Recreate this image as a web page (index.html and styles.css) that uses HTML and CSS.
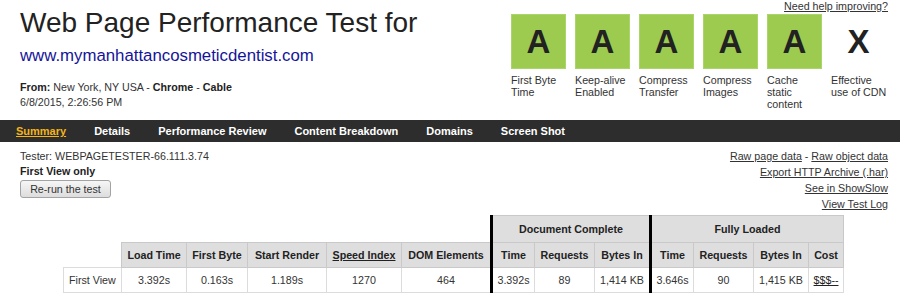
FILE: index.html
```html
<!DOCTYPE html>
<html lang="en">
<head>
    <meta charset="UTF-8">
    <title>WebPagetest Test Result</title>
    <link rel="stylesheet" href="styles.css">
</head>
<body>
    <div class="top">
        <div class="heading">
            <h1>Web Page Performance Test for</h1>
            <a href="#" class="url">www.mymanhattancosmeticdentist.com</a>
            <p class="from"><b>From:</b> New York, NY USA - <b>Chrome</b> - <b>Cable</b><br>6/8/2015, 2:26:56 PM</p>
        </div>
        <div class="grades">
            <a href="#" class="help">Need help improving?</a>
            <ul class="gradelist">
                <li><div class="grade">A</div><span>First Byte Time</span></li>
                <li><div class="grade">A</div><span>Keep-alive Enabled</span></li>
                <li><div class="grade">A</div><span>Compress Transfer</span></li>
                <li><div class="grade">A</div><span>Compress Images</span></li>
                <li><div class="grade">A</div><span>Cache static content</span></li>
                <li class="last"><div class="grade nograde">X</div><span>Effective use of CDN</span></li>
            </ul>
        </div>
    </div>

    <nav class="tabs">
        <a href="#" class="current">Summary</a>
        <a href="#">Details</a>
        <a href="#">Performance Review</a>
        <a href="#">Content Breakdown</a>
        <a href="#">Domains</a>
        <a href="#">Screen Shot</a>
    </nav>

    <div class="info">
        <div class="tester">
            Tester: WEBPAGETESTER-66.111.3.74<br>
            <b>First View only</b><br>
            <button class="rerun">Re-run the test</button>
        </div>
        <div class="links">
            <a href="#">Raw page data</a> - <a href="#">Raw object data</a><br>
            <a href="#">Export HTTP Archive (.har)</a><br>
            <a href="#">See in ShowSlow</a><br>
            <a href="#">View Test Log</a>
        </div>
    </div>

    <table class="results">
        <colgroup>
            <col style="width:58px"><col style="width:65px"><col style="width:61px"><col style="width:79px">
            <col style="width:75px"><col style="width:90px"><col style="width:43px"><col style="width:60px">
            <col style="width:56px"><col style="width:43px"><col style="width:60px"><col style="width:55px">
            <col style="width:35px">
        </colgroup>
        <tr class="group">
            <th colspan="6" class="empty"></th>
            <th colspan="3" class="sep">Document Complete</th>
            <th colspan="4" class="sep">Fully Loaded</th>
        </tr>
        <tr class="names">
            <th class="empty"></th>
            <th>Load Time</th>
            <th>First Byte</th>
            <th>Start Render</th>
            <th><a href="#">Speed Index</a></th>
            <th>DOM Elements</th>
            <th class="sep">Time</th>
            <th>Requests</th>
            <th>Bytes In</th>
            <th class="sep">Time</th>
            <th>Requests</th>
            <th>Bytes In</th>
            <th>Cost</th>
        </tr>
        <tr class="data">
            <td class="label">First View</td>
            <td>3.392s</td>
            <td>0.163s</td>
            <td>1.189s</td>
            <td>1270</td>
            <td>464</td>
            <td class="sep">3.392s</td>
            <td>89</td>
            <td>1,414 KB</td>
            <td class="sep">3.646s</td>
            <td>90</td>
            <td>1,415 KB</td>
            <td><a href="#">$$$--</a></td>
        </tr>
    </table>
</body>
</html>
```

FILE: styles.css
```css
body{
    margin: 0;
    font-family: 'Liberation Sans', Arial, sans-serif;
    font-size: 10.7px;
    color: #333;
    background-color: #fff;
}

a{
    color: #333;
}

.top{
    display: flex;
    justify-content: space-between;
    height: 110px;
    padding: 0 12px 0 20px;
}

h1{
    margin: 0;
    padding-top: 7px;
    font-size: 28px;
    font-weight: normal;
    line-height: 32px;
    color: #222;
}

.url{
    display: block;
    margin-top: 7px;
    font-size: 16.8px;
    line-height: 20px;
    color: #14149a;
    text-decoration: none;
}

.from{
    margin: 14px 0 0 0;
    line-height: 15px;
    color: #333;
}
.from b{
    color: #222;
}

.grades{
    display: flex;
    flex-direction: column;
    align-items: flex-end;
}

.help{
    line-height: 13px;
}

.gradelist{
    display: flex;
    gap: 9px;
    margin: 1px 0 0 0;
    padding: 0;
    list-style: none;
}

.gradelist li{
    width: 55px;
    line-height: 12px;
}
.gradelist li.last{
    width: 57px;
}

.grade{
    box-sizing: border-box;
    width: 55px;
    height: 55px;
    margin-bottom: 5px;
    background-color: #9ccb50;
    border: 1px solid #abd56c;
    color: #222;
    font-size: 33px;
    font-weight: bold;
    line-height: 53px;
    text-align: center;
}
.grade.nograde{
    background-color: transparent;
    border-color: transparent;
}

.tabs{
    display: flex;
    gap: 28px;
    margin-top: 10px;
    padding-left: 16px;
    height: 22px;
    background-color: #2d2d2d;
}
.tabs a{
    color: #fff;
    font-size: 11px;
    font-weight: bold;
    line-height: 22px;
    text-decoration: none;
}
.tabs a.current{
    color: #f4b41a;
    text-decoration: underline;
}

.info{
    display: flex;
    justify-content: space-between;
    align-items: flex-start;
    height: 73px;
    padding: 0 12px 0 20px;
}

.tester{
    margin-top: 7px;
    line-height: 15px;
}
.tester b{
    color: #222;
}

.rerun{
    margin-top: 1px;
    height: 18px;
    width: 91px;
    padding: 0;
    font-family: inherit;
    font-size: 10.7px;
    color: #333;
    background: linear-gradient(#f6f6f6, #dddddd);
    border: 1px solid #a3a3a3;
    border-radius: 3px;
}

.links{
    margin-top: 6px;
    line-height: 16px;
    text-align: right;
}

.results{
    table-layout: fixed;
    width: 780px;
    margin: 0 0 0 63px;
    border-collapse: collapse;
}

.results th{
    background-color: #dedede;
    border: 1px solid #c9c9c9;
    color: #222;
    font-weight: bold;
    padding: 0;
    white-space: nowrap;
}
.results th a{
    color: #222;
}
.results .group th{
    height: 26px;
}
.results .names th{
    height: 24px;
}
.results th.empty{
    background-color: transparent;
    border: none;
}

.results td{
    height: 24px;
    padding: 0;
    border: 1px solid #dcdcdc;
    text-align: center;
    white-space: nowrap;
}
.results td.label{
    text-align: left;
    padding-left: 5px;
}
.results td a{
    color: #222;
}

.results .sep{
    border-left: 3px solid #000;
}
```
